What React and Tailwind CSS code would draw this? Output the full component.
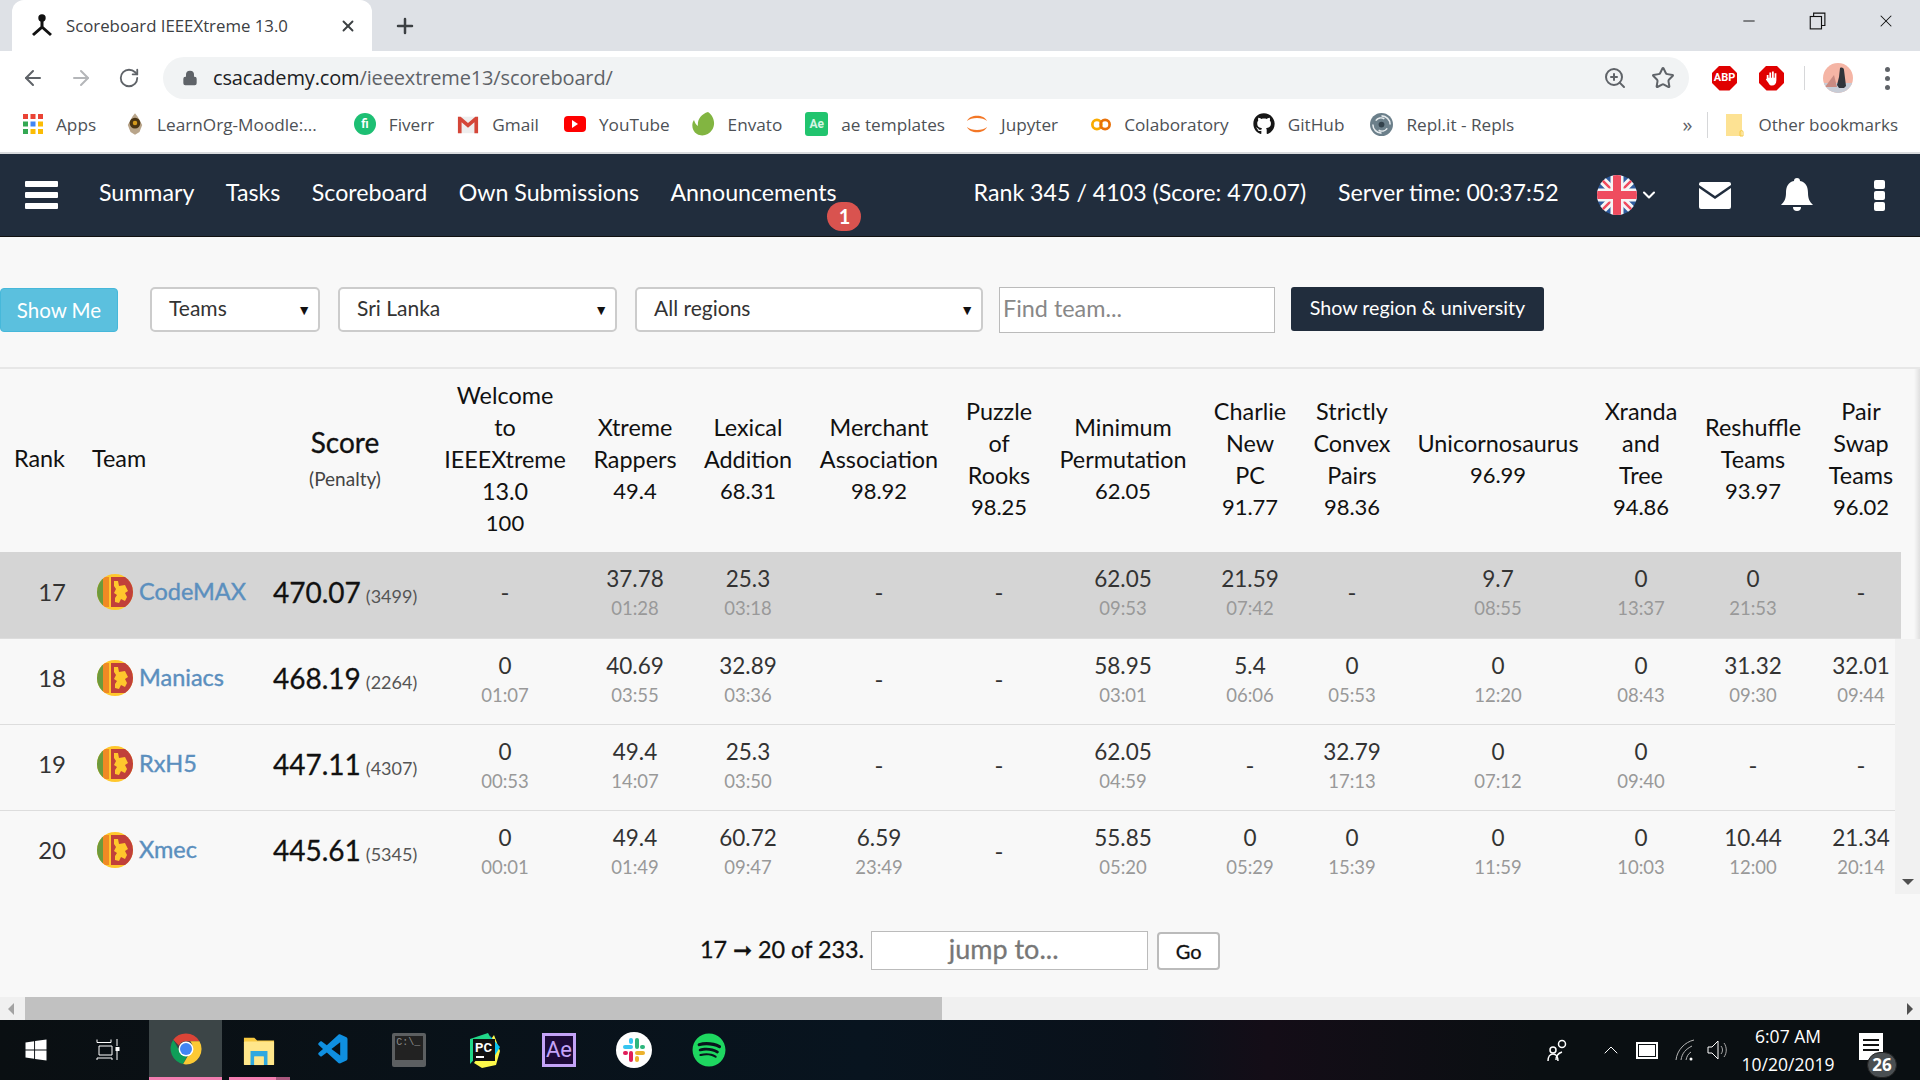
import React from "react";
import { ArrowLeft, ArrowRight, RotateCw, Lock, Star, ZoomIn, X, Plus, Minus, ChevronDown, ChevronUp } from "lucide-react";
import { FaGithub, FaSpotify, FaWindows } from "react-icons/fa";
import { VscVscode } from "react-icons/vsc";

const columns = [
  { lines: ["Welcome", "to", "IEEEXtreme", "13.0"], pts: "100", width: "w-[160px]" },
  { lines: ["Xtreme", "Rappers"], pts: "49.4", width: "w-[100px]" },
  { lines: ["Lexical", "Addition"], pts: "68.31", width: "w-[126px]" },
  { lines: ["Merchant", "Association"], pts: "98.92", width: "w-[136px]" },
  { lines: ["Puzzle", "of", "Rooks"], pts: "98.25", width: "w-[104px]" },
  { lines: ["Minimum", "Permutation"], pts: "62.05", width: "w-[144px]" },
  { lines: ["Charlie", "New", "PC"], pts: "91.77", width: "w-[110px]" },
  { lines: ["Strictly", "Convex", "Pairs"], pts: "98.36", width: "w-[94px]" },
  { lines: ["Unicornosaurus"], pts: "96.99", width: "w-[198px]" },
  { lines: ["Xranda", "and", "Tree"], pts: "94.86", width: "w-[88px]" },
  { lines: ["Reshuffle", "Teams"], pts: "93.97", width: "w-[136px]" },
  { lines: ["Pair", "Swap", "Teams"], pts: "96.02", width: "w-[80px]" },
];

const rows = [
  { rank: 17, team: "CodeMAX", score: "470.07", penalty: "3499", me: true, cells: [null, ["37.78", "01:28"], ["25.3", "03:18"], null, null, ["62.05", "09:53"], ["21.59", "07:42"], null, ["9.7", "08:55"], ["0", "13:37"], ["0", "21:53"], null] },
  { rank: 18, team: "Maniacs", score: "468.19", penalty: "2264", cells: [["0", "01:07"], ["40.69", "03:55"], ["32.89", "03:36"], null, null, ["58.95", "03:01"], ["5.4", "06:06"], ["0", "05:53"], ["0", "12:20"], ["0", "08:43"], ["31.32", "09:30"], ["32.01", "09:44"]] },
  { rank: 19, team: "RxH5", score: "447.11", penalty: "4307", cells: [["0", "00:53"], ["49.4", "14:07"], ["25.3", "03:50"], null, null, ["62.05", "04:59"], null, ["32.79", "17:13"], ["0", "07:12"], ["0", "09:40"], null, null] },
  { rank: 20, team: "Xmec", score: "445.61", penalty: "5345", cells: [["0", "00:01"], ["49.4", "01:49"], ["60.72", "09:47"], ["6.59", "23:49"], null, ["55.85", "05:20"], ["0", "05:29"], ["0", "15:39"], ["0", "11:59"], ["0", "10:03"], ["10.44", "12:00"], ["21.34", "20:14"]] },
];

const SriLankaFlag = () => (
  <svg viewBox="0 0 36 36" className="w-[36px] h-[36px] shrink-0">
    <defs><clipPath id="lk"><circle cx="18" cy="18" r="18" /></clipPath></defs>
    <g clipPath="url(#lk)">
      <rect width="36" height="36" fill="#ffc72c" />
      <rect x="0" y="3" width="6" height="30" fill="#6d9a3c" />
      <rect x="6" y="3" width="6" height="30" fill="#f08a24" />
      <rect x="14" y="3" width="22" height="30" fill="#c1403a" />
      <path d="M17 7h4l1 5 6-1 3 6-3 2 2 4-2 4-4-2-2 4-4-1v-4l2-3-3-2 2-4-2-3z" fill="#ffc72c" />
    </g>
  </svg>
);

const UkFlag = () => (
  <svg viewBox="0 0 40 40" className="w-[40px] h-[40px]">
    <defs><clipPath id="uk"><circle cx="20" cy="20" r="20" /></clipPath></defs>
    <g clipPath="url(#uk)">
      <rect width="40" height="40" fill="#2f5c9e" />
      <path d="M0 0L40 40M40 0L0 40" stroke="#f5f5f5" strokeWidth="8" />
      <path d="M0 0L40 40M40 0L0 40" stroke="#ef4c5f" strokeWidth="2.5" />
      <path d="M20 0V40M0 20H40" stroke="#f5f5f5" strokeWidth="13" />
      <path d="M20 0V40M0 20H40" stroke="#ef4c5f" strokeWidth="8" />
    </g>
  </svg>
);

const ChromeLogo = () => (
  <svg viewBox="0 0 48 48" className="w-[34px] h-[34px]">
    <path d="M24 2a22 22 0 0 1 19 11H24a11 11 0 0 0-10 6L6 11A22 22 0 0 1 24 2z" fill="#db4437" />
    <path d="M6 11l9 16a11 11 0 0 0 11 6l-6 12A22 22 0 0 1 6 11z" fill="#0f9d58" />
    <path d="M43 13a22 22 0 0 1-19 33l-4-1 10-17a11 11 0 0 0 0-15z" fill="#fcc934" />
    <circle cx="24" cy="24" r="10.5" fill="#fff" />
    <circle cx="24" cy="24" r="8.5" fill="#4285f4" />
  </svg>
);

const Explorer = () => (
  <svg viewBox="0 0 34 34" className="w-[32px] h-[34px]">
    <path d="M1 4h11l3 3h18v26H1z" fill="#f8c940" />
    <rect x="1" y="8" width="32" height="25" rx="1" fill="#ffe68a" />
    <path d="M8 33V18h18v15h-4v-9H12v9z" fill="#2fa8e0" />
    <rect x="12" y="24" width="10" height="9" fill="#ffe68a" />
  </svg>
);

const Terminal = () => (
  <div className="w-[34px] h-[34px] bg-[#5c5f61] p-[3px] rounded-[2px] flex items-start">
    <div className="w-full h-[24px] bg-[#222] text-[#8b8b8b] text-[10px] leading-[14px] font-mono px-[1px]">C:\_</div>
  </div>
);

const PyCharm = () => (
  <svg viewBox="0 0 36 36" className="w-[36px] h-[36px]">
    <path d="M4 7l18-6 4 7-22 24z" fill="#21d789" />
    <path d="M28 3l6 16-4 14-14 3-8-5z" fill="#fcf84a" />
    <path d="M24 4l10 11-6 10z" fill="#07c3f2" />
    <rect x="7" y="7" width="22" height="22" fill="#111" />
    <text x="9" y="20" fill="#fff" fontSize="13" fontWeight="700" fontFamily="Roboto, sans-serif">PC</text>
    <rect x="10" y="24" width="8" height="2" fill="#fff" />
  </svg>
);

const AfterEffects = () => (
  <div className="w-[34px] h-[34px] bg-[#1d0a38] border-[3px] border-[#c4a3f7] flex items-center justify-center text-[#c4a3f7] text-[22px] leading-none font-['Roboto',sans-serif]">Ae</div>
);

const Slack = () => (
  <svg viewBox="0 0 36 36" className="w-[36px] h-[36px]">
    <circle cx="18" cy="18" r="18" fill="#fff" />
    <rect x="7" y="13" width="10" height="4" rx="2" fill="#36c5f0" />
    <rect x="13" y="6" width="4" height="6" rx="2" fill="#36c5f0" />
    <rect x="19" y="6" width="4" height="11" rx="2" fill="#2eb67d" />
    <rect x="24" y="13" width="5" height="4" rx="2" fill="#2eb67d" />
    <rect x="19" y="19" width="10" height="4" rx="2" fill="#ecb22e" />
    <rect x="19" y="24" width="4" height="6" rx="2" fill="#ecb22e" />
    <rect x="13" y="19" width="4" height="11" rx="2" fill="#e01e5a" />
    <rect x="7" y="19" width="5" height="4" rx="2" fill="#e01e5a" />
  </svg>
);

const Apps = () => (
  <svg viewBox="0 0 20 20" className="w-[20px] h-[20px]">
    <rect x="0" y="0" width="5" height="5" fill="#ea4335" /><rect x="7.5" y="0" width="5" height="5" fill="#ea4335" /><rect x="15" y="0" width="5" height="5" fill="#ea4335" />
    <rect x="0" y="7.5" width="5" height="5" fill="#34a853" /><rect x="7.5" y="7.5" width="5" height="5" fill="#4285f4" /><rect x="15" y="7.5" width="5" height="5" fill="#fbbc05" />
    <rect x="0" y="15" width="5" height="5" fill="#34a853" /><rect x="7.5" y="15" width="5" height="5" fill="#fbbc05" /><rect x="15" y="15" width="5" height="5" fill="#fbbc05" />
  </svg>
);

const Moodle = () => (
  <svg viewBox="0 0 20 24" className="w-[18px] h-[22px]">
    <path d="M10 0l3 4 5 9-3 8-5 3-5-3-3-8 5-9z" fill="#b9a58a" />
    <circle cx="10" cy="11" r="6" fill="#4a3413" />
    <circle cx="10" cy="11" r="2.5" fill="#d49a1d" />
  </svg>
);

const Fiverr = () => (
  <div className="w-[22px] h-[22px] rounded-full bg-[#1dbf73] text-white text-[12px] font-bold leading-[22px] text-center font-['Roboto',sans-serif]">fi</div>
);

const Gmail = () => (
  <svg viewBox="0 0 24 20" className="w-[22px] h-[20px]">
    <path d="M1 2h22v18H1z" fill="#eee" />
    <path d="M1 20V2h3l8 7 8-7h3v18h-4V8l-7 6-7-6v12z" fill="#d44638" />
  </svg>
);

const YouTube = () => (
  <div className="w-[22px] h-[16px] rounded-[4px] bg-[#f00] flex items-center justify-center">
    <div className="w-0 h-0 border-y-[4px] border-y-transparent border-l-[6px] border-l-white" />
  </div>
);

const Envato = () => (
  <svg viewBox="0 0 24 24" className="w-[24px] h-[24px]">
    <path d="M17 0c6 4 8 12 4 18-3 5-10 7-15 4C1 19 0 12 3 8c1 3 2 5 4 6C6 8 10 2 17 0z" fill="#82b541" />
  </svg>
);

const AeTile = () => (
  <div className="w-[23px] h-[24px] rounded-[3px] bg-[#21c46e] text-[#d6f5e3] text-[12px] font-bold leading-[24px] text-center font-['Roboto',sans-serif]">Ae</div>
);

const Jupyter = () => (
  <svg viewBox="0 0 22 24" className="w-[22px] h-[24px]">
    <path d="M1 9C4 2 18 2 21 9 17 5 5 5 1 9z" fill="#f37726" />
    <path d="M1 15C4 22 18 22 21 15 17 19 5 19 1 15z" fill="#f37726" />
  </svg>
);

const Colab = () => (
  <svg viewBox="0 0 22 14" className="w-[20px] h-[13px]" fill="none" strokeWidth="3">
    <circle cx="6.5" cy="7" r="5" stroke="#f9ab00" />
    <circle cx="15.5" cy="7" r="5" stroke="#e8710a" />
  </svg>
);

const Replit = () => (
  <svg viewBox="0 0 24 24" className="w-[23px] h-[23px]">
    <circle cx="12" cy="12" r="12" fill="#6b7f8a" />
    <path d="M12 3a9 9 0 0 1 9 9M12 21a9 9 0 0 1-9-9M6 8a7 7 0 0 1 9-2M18 16a7 7 0 0 1-9 2" stroke="#e6ebee" strokeWidth="1.6" fill="none" />
    <circle cx="12" cy="12" r="3" fill="#33424c" />
  </svg>
);

const Octagon = ({ children }) => (
  <div className="w-[25px] h-[25px] bg-[#e00000] [clip-path:polygon(30%_0,70%_0,100%_30%,100%_70%,70%_100%,30%_100%,0_70%,0_30%)] flex items-center justify-center text-white">
    {children}
  </div>
);

const Avatar = () => (
  <svg viewBox="0 0 30 30" className="w-[30px] h-[30px]">
    <defs><clipPath id="av"><circle cx="15" cy="15" r="15" /></clipPath></defs>
    <g clipPath="url(#av)">
      <rect width="30" height="30" fill="#f5b5a5" />
      <rect y="20" width="30" height="10" fill="#c7ccd6" />
      <path d="M2 24l9-12 3 12z" fill="#c98b82" />
      <path d="M17 5c2-1 4 0 4 2l2 16-2 2h-5l-2-3 2-8z" fill="#30343a" />
    </g>
  </svg>
);

const bookmarks = [
  { label: "Apps", icon: <Apps />, gap: "mr-[30px]" },
  { label: "LearnOrg-Moodle:...", icon: <Moodle />, gap: "mr-[37px]" },
  { label: "Fiverr", icon: <Fiverr />, gap: "mr-[23px]" },
  { label: "Gmail", icon: <Gmail />, gap: "mr-[25px]" },
  { label: "YouTube", icon: <YouTube />, gap: "mr-[21px]" },
  { label: "Envato", icon: <Envato />, gap: "mr-[23px]" },
  { label: "ae templates", icon: <AeTile />, gap: "mr-[21px]" },
  { label: "Jupyter", icon: <Jupyter />, gap: "mr-[33px]" },
  { label: "Colaboratory", icon: <Colab />, gap: "mr-[24px]" },
  { label: "GitHub", icon: <FaGithub className="w-[22px] h-[22px] text-[#161616]" />, gap: "mr-[26px]" },
  { label: "Repl.it - Repls", icon: <Replit />, gap: "" },
];

const BrowserChrome = () => (
  <div className="font-['Open_Sans',sans-serif] text-[#3c4043]">
    <div className="h-[51px] bg-[#dee1e6] flex items-end pl-[12px]">
      <div className="w-[360px] h-[51px] bg-white rounded-t-[12px] flex items-center pl-[18px] pr-[15px]">
        <svg viewBox="0 0 24 24" className="w-[24px] h-[24px] shrink-0 text-[#111]" fill="none" stroke="currentColor" strokeWidth="3">
          <circle cx="12" cy="4" r="2.2" fill="currentColor" />
          <path d="M12 5v8L3 21M12 13l9 8" />
        </svg>
        <span className="ml-[12px] text-[16.8px] whitespace-nowrap">Scoreboard IEEEXtreme 13.0</span>
        <X className="ml-auto w-[18px] h-[18px]" strokeWidth={2.5} />
      </div>
      <Plus className="ml-[21px] mb-[13px] w-[24px] h-[24px] text-[#3c4043]" strokeWidth={2.5} />
      <div className="ml-auto self-start flex items-center h-[42px] pr-[24px] gap-[50px] text-[#111]">
        <Minus className="w-[18px] h-[18px]" strokeWidth={1.25} />
        <svg viewBox="0 0 16 16" className="w-[18px] h-[18px]" fill="none" stroke="currentColor"><rect x="2" y="4" width="10" height="11" /><path d="M5 4V1h10v11h-3" /></svg>
        <X className="w-[20px] h-[20px]" strokeWidth={1.25} />
      </div>
    </div>

    <div className="h-[54px] bg-white flex items-center pl-[21px] pr-[23px]">
      <ArrowLeft className="w-[24px] h-[24px] text-[#5f6368]" strokeWidth={2} />
      <ArrowRight className="ml-[24px] w-[24px] h-[24px] text-[#b4b6b9]" strokeWidth={2} />
      <RotateCw className="ml-[25px] w-[22px] h-[22px] text-[#5f6368]" strokeWidth={2} />
      <div className="ml-[23px] w-[1526px] h-[42px] shrink-0 rounded-full bg-[#f1f3f4] flex items-center pl-[19px] pr-[14px]">
        <Lock className="w-[16px] h-[16px] text-[#5f6368]" fill="currentColor" strokeWidth={2} />
        <span className="ml-[15px] text-[20px] text-[#202124] tracking-[-0.14px]">csacademy.com<span className="text-[#5f6368]">/ieeextreme13/scoreboard/</span></span>
        <ZoomIn className="ml-auto w-[24px] h-[24px] text-[#5f6368]" strokeWidth={2} />
        <Star className="ml-[24px] w-[24px] h-[24px] text-[#5f6368]" strokeWidth={2} />
      </div>
      <div className="ml-[23px]"><Octagon><span className="text-[11px] font-bold font-['Roboto',sans-serif]">ABP</span></Octagon></div>
      <div className="ml-[22px]"><Octagon><svg viewBox="0 0 16 18" className="w-[14px] h-[17px]" fill="#fff"><path d="M2 9V5h2v3h1V2h2v6h1V1h2v7h1V3h2v8c0 4-2 6-5 6-2 0-3-1-4-3L1 10l1-1z" /></svg></Octagon></div>
      <div className="ml-[20px] w-px h-[24px] bg-[#d6d7d9]" />
      <div className="ml-[18px]"><Avatar /></div>
      <div className="ml-[32px] flex flex-col gap-[4px]">
        <div className="w-[5px] h-[5px] rounded-full bg-[#5f6368]" />
        <div className="w-[5px] h-[5px] rounded-full bg-[#5f6368]" />
        <div className="w-[5px] h-[5px] rounded-full bg-[#5f6368]" />
      </div>
    </div>

    <div className="h-[49px] pb-[8px] bg-white border-b-2 border-[#d9dbde] flex items-center pl-[23px] pr-[22px] text-[17.2px] text-[#4d5156]">
      {bookmarks.map(b => (
        <div key={b.label} className={`flex items-center gap-[13px] ${b.gap}`}>
          {b.icon}
          <span className="whitespace-nowrap">{b.label}</span>
        </div>
      ))}
      <span className="ml-auto mr-[-3px] text-[20px] leading-none text-[#5f6368]">»</span>
      <div className="ml-[18px] w-px h-[26px] bg-[#d6d7d9]" />
      <svg viewBox="0 0 18 24" className="ml-[18px] w-[18px] h-[24px]"><path d="M0 1h16v22H0z" fill="#fde293" /><path d="M14 23v-4a1.500 1.500 0 0 1 3 0v4z" fill="none" stroke="#f6c945" /></svg>
      <span className="ml-[14px] text-[17px] whitespace-nowrap">Other bookmarks</span>
    </div>
  </div>
);

const NavBar = () => (
  <div className="h-[83px] bg-[#212d3d] flex items-center whitespace-nowrap text-white text-[23.2px] font-['Lato',sans-serif] border-b border-[#111]">
    <div className="ml-[25px] w-[33px] flex flex-col gap-[5px]">
      <div className="h-[6px] bg-white rounded-[1px]" />
      <div className="h-[6px] bg-white rounded-[1px]" />
      <div className="h-[6px] bg-white rounded-[1px]" />
    </div>
    <div className="ml-[41px] pb-[5px] flex gap-[31.500px]">
      <span>Summary</span>
      <span>Tasks</span>
      <span>Scoreboard</span>
      <span>Own Submissions</span>
      <span className="relative">
        Announcements
        <span className="absolute left-[157px] top-[27px] w-[34px] h-[29px] rounded-full bg-[#d9534f] text-[20px] font-bold leading-[29px] text-center">1</span>
      </span>
    </div>
    <span className="ml-[137px] pb-[5px]">Rank 345 / 4103 (Score: 470.07)</span>
    <span className="ml-[32px] pb-[5px]">Server time: 00:37:52</span>
    <div className="ml-[38px]"><UkFlag /></div>
    <ChevronDown className="ml-[2px] w-[20px] h-[20px]" strokeWidth={2.5} />
    <svg viewBox="0 0 32 27" className="ml-[40px] w-[32px] h-[27px]" fill="#fff"><path d="M2 0h28a2 2 0 0 1 2 2v1L16 14 0 3V2a2 2 0 0 1 2-2z" /><path d="M0 6l16 11L32 6v19a2 2 0 0 1-2 2H2a2 2 0 0 1-2-2z" /></svg>
    <svg viewBox="0 0 32 34" className="ml-[50px] w-[32px] h-[34px]" fill="#fff"><path d="M16 0a3 3 0 0 1 3 3c6 1 8 6 8 12 0 6 2 9 5 12H0c3-3 5-6 5-12 0-6 2-11 8-12a3 3 0 0 1 3-3z" /><path d="M12 29h8a4 4 0 0 1-8 0z" /></svg>
    <div className="ml-[61px] flex flex-col gap-[2px]">
      <div className="w-[11px] h-[9px] rounded-[2px] bg-white" />
      <div className="w-[11px] h-[9px] rounded-[2px] bg-white" />
      <div className="w-[11px] h-[9px] rounded-[2px] bg-white" />
    </div>
  </div>
);

const FakeSelect = ({ label, width }) => (
  <div className={`${width} h-[45px] bg-white border-2 border-[#ccc] rounded-[5px] flex items-center justify-between pl-[17px] pr-[7px] text-[21px] text-[#333]`}>
    <span className="pb-[3px]">{label}</span>
    <span className="text-[14px] text-[#111]">▼</span>
  </div>
);

const Controls = () => (
  <div className="h-[130px] pt-[50px] flex items-start">
    <button className="mt-[1px] w-[118px] h-[44px] bg-[#5bc0de] border border-[#46b8da] rounded-[4px] text-white text-[20.5px]">Show Me</button>
    <div className="ml-[32px]"><FakeSelect label="Teams" width="w-[170px]" /></div>
    <div className="ml-[18px]"><FakeSelect label="Sri Lanka" width="w-[279px]" /></div>
    <div className="ml-[18px]"><FakeSelect label="All regions" width="w-[348px]" /></div>
    <input placeholder="Find team..." className="ml-[16px] w-[276px] h-[46px] bg-white border border-[#bbb] px-[3px] pb-[4px] text-[23.4px] placeholder:text-[#888] outline-none" />
    <button className="ml-[16px] w-[253px] h-[44px] bg-[#212d3d] rounded-[3px] text-white text-[19.7px] pb-[2px]">Show region &amp; university</button>
  </div>
);

const ScoreCell = ({ cell }) => (
  <td className="text-center align-middle p-0 pb-[1px]">
    {cell ? (
      <>
        <div className="text-[22.5px] leading-[28px] text-[#333]">{cell[0]}</div>
        <div className="text-[18.5px] leading-[30px] text-[#999]">{cell[1]}</div>
      </>
    ) : (
      <span className="block pb-[4px] text-[24px] text-[#333]">-</span>
    )}
  </td>
);

const Scoreboard = () => (
  <div className="relative h-[527px] border-t-2 border-[#e7e7e7] overflow-hidden">
    <table className="table-fixed border-collapse w-[1901px] text-[#111]">
      <colgroup>
        <col className="w-[78px]" />
        <col className="w-[187px]" />
        <col className="w-[160px]" />
        {columns.map(c => <col key={c.lines.join()} className={c.width} />)}
      </colgroup>
      <thead>
        <tr className="h-[183px] text-[23.4px] leading-[32px]">
          <th className="font-normal text-right pr-[13px] pb-[6px]">Rank</th>
          <th className="font-normal text-left pl-[14px] pb-[6px]">Team</th>
          <th className="font-normal text-center pb-[4px]">
            <div className="text-[28px] leading-[40px] [-webkit-text-stroke:0.3px]">Score</div>
            <div className="text-[19px] leading-[34px] text-[#444]">(Penalty)</div>
          </th>
          {columns.map(c => (
            <th key={c.lines.join()} className="font-normal text-center pb-[4px]">
              {c.lines.map(l => <div key={l}>{l}</div>)}
              <div className="text-[22px]">{c.pts}</div>
            </th>
          ))}
        </tr>
      </thead>
      <tbody>
        {rows.map(r => (
          <tr key={r.rank} className={`h-[86px] border-b border-[#ddd] ${r.me ? "bg-[#d5d5d5]" : ""}`}>
            <td className="text-right pr-[12px] pb-[6px] text-[24px] text-[#333]">{r.rank}</td>
            <td className="pl-[19px] pb-[6px]">
              <div className="flex items-center gap-[6px]">
                <SriLankaFlag />
                <span className="text-[23.5px] text-[#5b8fbe] [-webkit-text-stroke:0.4px]">{r.team}</span>
              </div>
            </td>
            <td className="pl-[8px] pb-[6px]">
              <span className="text-[28px] text-[#111] [-webkit-text-stroke:0.3px]">{r.score}</span>
              <span className="ml-[5px] text-[18px] text-[#555]">({r.penalty})</span>
            </td>
            {r.cells.map((c, i) => <ScoreCell key={i} cell={c} />)}
          </tr>
        ))}
      </tbody>
    </table>
    <div className="absolute right-0 top-[270px] bottom-0 w-[25px] bg-[#f1f1f1] flex items-end justify-center pb-[9px]">
      <div className="w-0 h-0 border-x-[6px] border-x-transparent border-t-[6px] border-t-[#505050]" />
    </div>
    <div className="absolute right-0 top-0 h-[270px] w-[6px] bg-gradient-to-r from-transparent to-black/10" />
  </div>
);

const Pagination = () => (
  <div className="pt-[36px] flex items-center justify-center text-[23.4px] text-[#111] [-webkit-text-stroke:0.3px]">
    <span>17 ➞ 20 of 233.</span>
    <input placeholder="jump to..." className="ml-[7px] w-[277px] h-[39px] bg-white border border-[#bbb] pr-[12px] pb-[2px] text-center text-[27px] placeholder:text-[#777] outline-none" />
    <button className="ml-[9px] w-[63px] h-[38px] bg-white border-2 border-[#bbb] rounded-[4px] text-[20px] mt-[2px]">Go</button>
  </div>
);

const HScroll = () => (
  <div className="mt-auto h-[23px] bg-[#f0f0f0] flex items-center">
    <div className="ml-[8px] w-0 h-0 border-y-[6px] border-y-transparent border-r-[6px] border-r-[#a3a3a3]" />
    <div className="ml-[11px] w-[917px] h-full bg-[#c1c1c1]" />
    <div className="ml-auto mr-[7px] w-0 h-0 border-y-[6px] border-y-transparent border-l-[6px] border-l-[#505050]" />
  </div>
);

const TaskButton = ({ children }) => (
  <div className="relative w-[74.9px] h-[60px] flex items-center justify-center">
    {children}
  </div>
);

const Taskbar = () => (
  <div className="h-[60px] flex items-center text-white font-['Open_Sans',sans-serif] bg-[linear-gradient(90deg,#0a0f12_0%,#08141f_45%,#0a111a_60%,#140d17_66%,#0a0f12_80%)]">
    <div className="w-[72px] flex justify-center"><FaWindows className="w-[24px] h-[24px]" /></div>
    <div className="w-[72px] mr-[5px] flex justify-center">
      <svg viewBox="0 0 24 24" className="w-[24px] h-[24px]" fill="none" stroke="#fff" strokeWidth="1"><path d="M1 4.500h14v-3M1 4.500v-3M3 8h13v9H3zM1 22v-2h15v2M21 1v7M21 13v9" /><rect x="20" y="9.500" width="3" height="3" fill="#fff" /></svg>
    </div>
    <div className="w-[73px] h-[60px] flex items-center justify-center bg-[#3c4547] border-b-[3px] border-[#f27db0]"><ChromeLogo /></div>
    <TaskButton>
      <Explorer />
      <div className="absolute bottom-0 left-[7px] w-[47px] h-[3px] bg-[#f27db0]" />
      <div className="absolute bottom-0 left-[54px] w-[14px] h-[3px] bg-[#a8577d]" />
    </TaskButton>
    <TaskButton><VscVscode className="w-[36px] h-[36px] text-[#0f8fe0]" /></TaskButton>
    <TaskButton><Terminal /></TaskButton>
    <TaskButton><PyCharm /></TaskButton>
    <TaskButton><AfterEffects /></TaskButton>
    <TaskButton><Slack /></TaskButton>
    <TaskButton><FaSpotify className="w-[34px] h-[34px] text-[#1ed760]" /></TaskButton>

    <svg viewBox="0 0 24 24" className="ml-auto w-[24px] h-[24px]" fill="none" stroke="#fff" strokeWidth="1.500"><circle cx="16" cy="6" r="3.500" /><path d="M10 22c0-5 3-7 6-8" /><circle cx="7" cy="12" r="3" /><path d="M2 23c0-4 2-7 5-7s5 3 5 7" /></svg>
    <ChevronUp className="ml-[29px] w-[24px] h-[24px]" strokeWidth={1} />
    <div className="ml-[13px] w-[22px] h-[17px] border-2 border-white p-[1px]"><div className="h-full bg-white" /></div>
    <svg viewBox="0 0 24 24" className="ml-[16px] w-[24px] h-[24px]" fill="none" stroke="#b5b5b5" strokeWidth="1"><path d="M2 22C3 12 11 4 20 2M7 22c1-7 5-11 11-14M12 22c1-4 2-6 5-8" /><circle cx="17" cy="21" r="1.500" fill="#fff" stroke="none" /></svg>
    <svg viewBox="0 0 24 24" className="ml-[7px] w-[24px] h-[24px]" fill="none" stroke="#fff" strokeWidth="1"><path d="M3 9h4l6-6v18l-6-6H3z" /><path d="M16 8c2 2 2 6 0 8M19 5c3 4 3 10 0 14" stroke="#aaa" /></svg>
    <div className="ml-[9px] w-[100px] text-center text-[17.5px] leading-[28px]">
      <div>6:07 AM</div>
      <div>10/20/2019</div>
    </div>
    <div className="relative ml-[21px] mr-[37px] w-[24px] h-[27px] mb-[8px] bg-white">
      <div className="absolute left-[4px] top-[6px] w-[16px] h-[2px] bg-[#111]" />
      <div className="absolute left-[4px] top-[11px] w-[16px] h-[2px] bg-[#111]" />
      <div className="absolute left-[4px] top-[16px] w-[16px] h-[2px] bg-[#111]" />
      <div className="absolute left-[8px] top-[19px] w-[30px] h-[26px] rounded-full bg-[#4a4f52] border border-[#222] text-white text-[17px] font-bold leading-[24px] text-center">26</div>
    </div>
  </div>
);

export default function App() {
  return (
    <div className="h-screen overflow-hidden flex flex-col bg-[#f8f8f8]">
      <BrowserChrome />
      <NavBar />
      <div className="flex-1 flex flex-col font-['Lato',sans-serif] min-h-0">
        <Controls />
        <Scoreboard />
        <Pagination />
        <HScroll />
      </div>
      <Taskbar />
    </div>
  );
}
